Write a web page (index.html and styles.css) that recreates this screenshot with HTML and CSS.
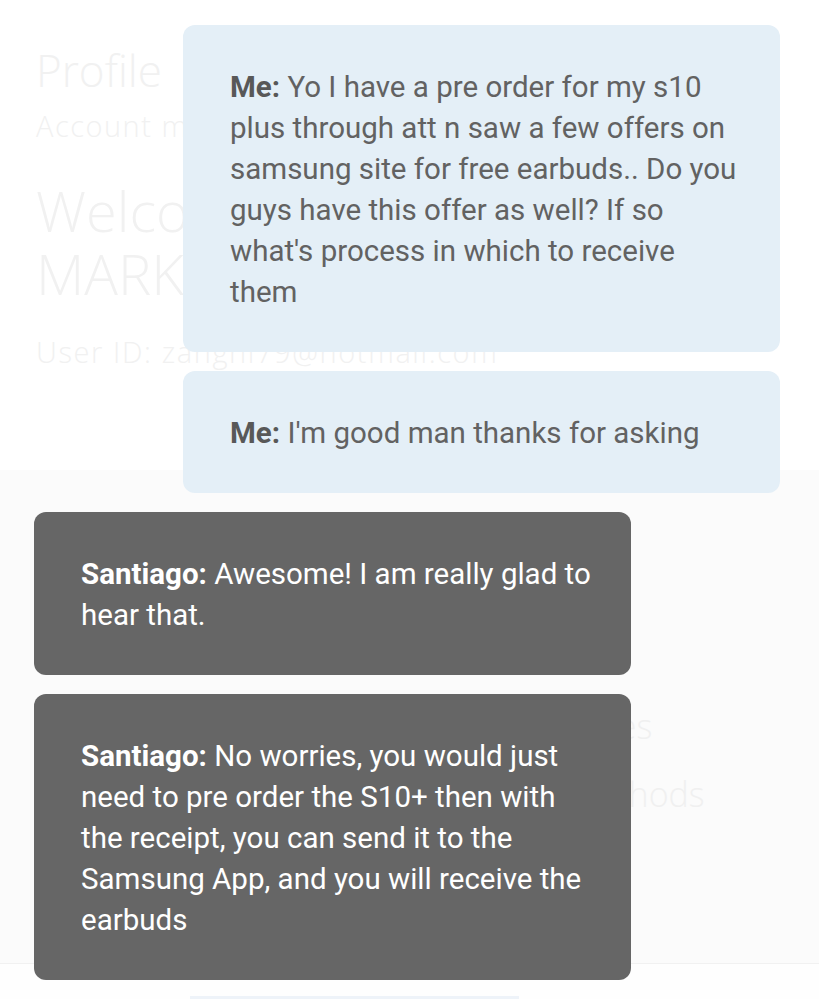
FILE: index.html
```html
<!DOCTYPE html>
<html lang="en">
<head>
<meta charset="utf-8">
<link rel="stylesheet" href="styles.css">
<title>Chat</title>
</head>
<body>
<div class="page">
  <section class="profile">
    <div class="title">Profile</div>
    <div class="subtitle">Account management</div>
    <div class="welcome">Welcome,<br>MARK ZANGHI</div>
    <div class="userid">User ID: zanghi79@hotmail.com</div>
  </section>
  <section class="lower">
    <div class="menu">
      <div class="menu-item indent">My addresses</div>
      <div class="menu-item">Payment methods</div>
    </div>
  </section>
  <footer class="footer">
    <div class="footer-bar"></div>
  </footer>

  <div class="chat">
    <div class="bubble me"><b>Me:</b> Yo I have a pre order for my s10 plus through att n saw a few offers on samsung site for free earbuds.. Do you guys have this offer as well? If so what's process in which to receive them</div>
    <div class="bubble me"><b>Me:</b> I'm good man thanks for asking</div>
    <div class="bubble agent"><b>Santiago:</b> Awesome! I am really glad to hear that.</div>
    <div class="bubble agent"><b>Santiago:</b> No worries, you would just need to pre order the S10+ then with the receipt, you can send it to the Samsung App, and you will receive the earbuds</div>
  </div>
</div>
</body>
</html>
```
FILE: styles.css
```css
* { box-sizing: border-box; }
html, body { margin: 0; padding: 0; }
body {
  width: 819px;
  height: 999px;
  overflow: hidden;
  background: #ffffff;
  font-family: "Open Sans", "Liberation Sans", sans-serif;
}
.page {
  position: relative;
  width: 819px;
  height: 999px;
  display: flex;
  flex-direction: column;
}
.profile {
  height: 470px;
  padding: 40px 0 0 36px;
  color: #f1f1f1;
  font-weight: 300;
  background: #ffffff;
}
.title {
  font-size: 44px;
  line-height: 60px;
}
.subtitle {
  font-size: 29px;
  line-height: 40px;
  margin-top: 6px;
  letter-spacing: 1.5px;
}
.welcome {
  font-size: 56px;
  line-height: 63px;
  margin-top: 33px;
}
.userid {
  font-size: 29px;
  line-height: 40px;
  margin-top: 27px;
  letter-spacing: 1.6px;
}
.lower {
  flex: 1;
  background: #fbfbfb;
  border-bottom: 1px solid #f1f1f1;
  padding: 236px 0 0 426px;
  color: #f0f0f0;
  font-weight: 300;
}
.menu { display: flex; flex-direction: column; gap: 28px; }
.menu-item { font-size: 34px; line-height: 40px; white-space: nowrap; }
.menu-item.indent { padding-left: 16px; }
.footer {
  height: 35px;
  background: #fefefe;
  padding: 32px 300px 0 190px;
}
.footer-bar {
  height: 3px;
  background: #eef3f9;
}
.chat {
  position: absolute;
  left: 34px;
  top: 25px;
  width: 746px;
  display: flex;
  flex-direction: column;
  gap: 19px;
  font-family: Roboto, "Liberation Sans", sans-serif;
  font-size: 29.5px;
  line-height: 41px;
}
.bubble {
  width: 597px;
  border-radius: 12px;
  padding: 42px 36px 39px 47px;
}
.bubble b { font-weight: 700; }
.me {
  align-self: flex-end;
  background: #e4eff7;
  color: #626262;
}
.me b { color: #585858; }
.agent {
  align-self: flex-start;
  background: #666666;
  color: #ffffff;
}
```
